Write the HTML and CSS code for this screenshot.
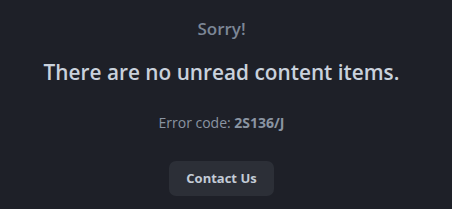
FILE: index.html
```html
<!DOCTYPE html>
<html lang="en">
<head>
    <meta charset="UTF-8">
    <title>Sorry!</title>
    <link rel="stylesheet" href="styles.css">
</head>
<body>
    <div class="error-box">
        <h2 class="error-title">Sorry!</h2>
        <h1 class="error-message">There are no unread content items.</h1>
        <p class="error-code">Error code: <b>2S136/J</b></p>
        <a href="#" class="contact-btn">Contact Us</a>
    </div>
</body>
</html>
```

FILE: styles.css
```css
body {
    margin: 0;
    background: #1e2028;
    font-family: "Open Sans", "Noto Sans", sans-serif;
}

.error-box {
    display: flex;
    flex-direction: column;
    align-items: center;
    text-align: center;
    padding: 17px 9px 0 0;
}

.error-title {
    margin: 0;
    font-size: 17px;
    font-weight: 600;
    line-height: 24px;
    color: #7c8696;
}

.error-message {
    margin: 17px 0 0;
    font-size: 20.8px;
    font-weight: 600;
    line-height: 28px;
    color: #c9d1dc;
}

.error-code {
    margin: 27px 0 0;
    font-size: 14px;
    line-height: 20px;
    color: #8a94a2;
}

.error-code b {
    font-weight: 700;
}

.contact-btn {
    margin-top: 28px;
    width: 105px;
    height: 35px;
    line-height: 35px;
    background: #2c2f37;
    border-radius: 7px;
    color: #c3cbd6;
    font-size: 13px;
    font-weight: 700;
    text-decoration: none;
}
```
